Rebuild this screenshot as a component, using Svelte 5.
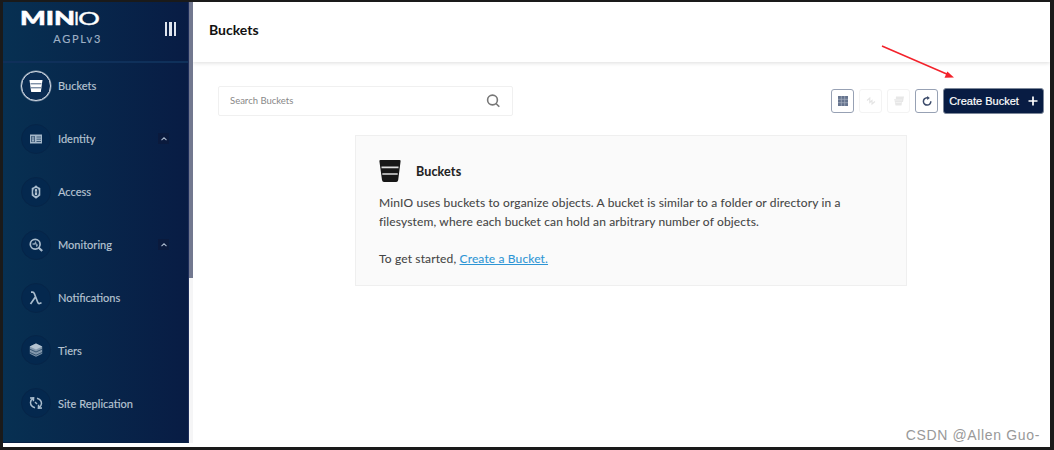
<script>
    let search = '';

    const items = [
        { label: 'Buckets', icon: 'bucket', active: true },
        { label: 'Identity', icon: 'identity', group: true },
        { label: 'Access', icon: 'access' },
        { label: 'Monitoring', icon: 'monitoring', group: true },
        { label: 'Notifications', icon: 'lambda' },
        { label: 'Tiers', icon: 'tiers' },
        { label: 'Site Replication', icon: 'replication' }
    ];
</script>

<div class="screen">
    <div class="app">
        <aside class="sidebar">
            <div class="brand">
                <div class="brand-name">
                    <svg class="logo" width="80" height="16" viewBox="0 0 80 16">
                        <text class="logo-bold" x="-1" y="14.500" textLength="55" lengthAdjust="spacingAndGlyphs">MIN</text>
                        <text class="logo-thin" x="53" y="14.500">I</text>
                        <text class="logo-thin" x="57" y="14.500" textLength="22" lengthAdjust="spacingAndGlyphs">O</text>
                    </svg>
                    <span class="license">AGPLv3</span>
                </div>
                <div class="menu-toggle"><i></i><i></i><i></i></div>
            </div>

            <nav>
                {#each items as item}
                    <a class="item" class:active={item.active} href="#{item.icon}">
                        <span class="circle">
                            <svg width="14" height="14" viewBox="0 0 14 14">
                                {#if item.icon === 'bucket'}
                                    <path d="M.5 1h13l-1.700 12H2.200z" fill="#fff" />
                                    <path d="M1.500 4.800h11M2 8.800h10" stroke="#4a6382" stroke-width="1" />
                                {:else if item.icon === 'identity'}
                                    <path d="M1 2.500h12v9H1z" fill="#a3b6c8" />
                                    <path d="M2.200 4h3.600v6H2.200z" fill="#31506f" />
                                    <path d="M7.500 5h4.500M7.500 7.200h4.500M7.500 9.500h4.500" stroke="#31506f" stroke-width=".9" />
                                    <path d="M4 4.500v4.500M3 8.800h2" stroke="#a3b6c8" stroke-width="1.300" />
                                {:else if item.icon === 'access'}
                                    <path d="M7 .3l2 1.700 2.300 1v7.500L7 13.700 2.700 10.500V3L5 2z" fill="#a9bccd" />
                                    <path d="M7 3a2.800 3.800 0 0 1 0 8a2.800 3.800 0 0 1 0-8z" fill="#183b5e" />
                                    <path d="M7 4v6M6 5.200h2M6 9h2" stroke="#c4d1dc" stroke-width="1.300" />
                                {:else if item.icon === 'monitoring'}
                                    <circle cx="6.200" cy="6.200" r="4.900" fill="none" stroke="#a9bccd" stroke-width="1.700" />
                                    <path d="M9.500 9.500l3.700 3.500" fill="none" stroke="#a9bccd" stroke-width="2.200" />
                                    <path d="M3.500 6h2l1-1.500 1.300 3.500.8-1.500" fill="none" stroke="#8fa5b9" stroke-width="1.300" />
                                {:else if item.icon === 'lambda'}
                                    <path d="M2 1.200h1.500q1.300 0 1.900 1.500l3.300 8.500q.6 1.600 1.800 1.300l2-.8M6.400 6L1.500 13" fill="none" stroke="#a9bccd" stroke-width="1.700" />
                                {:else if item.icon === 'tiers'}
                                    <path d="M7 .5l6.200 3v7.300L7 13.700.8 10.800V3.500z" fill="#8297ac" />
                                    <path d="M7 .5l6.200 3L7 6.500.8 3.500z" fill="#b4c3d0" />
                                    <path d="M.5 6l6.500 3 6.500-3M.5 9.300L7 12.200l6.500-2.900" fill="none" stroke="#173959" stroke-width=".7" />
                                {:else}
                                    <path d="M6 11.800Q1.500 10.500 1.500 6.500 1.600 4 4.200 2.200M1 2l3.600-.2-.2 3.400M8 2.200q4.500 1.300 4.500 5.300-.1 2.500-2.700 4.300M13 12l-3.600.2.200-3.400" fill="none" stroke="#a9bccd" stroke-width="1.500" />
                                    <path d="M6 6l2 2" stroke="#a9bccd" stroke-width="1.500" />
                                {/if}
                            </svg>
                        </span>
                        <span class="label">{item.label}</span>
                        {#if item.group}
                            <span class="chevron">
                                <svg width="8" height="6" viewBox="0 0 8 6"><path d="M1.500 4.200L4 1.800l2.500 2.400" fill="none" stroke="#a9b7cb" stroke-width="1.100" /></svg>
                            </span>
                        {/if}
                    </a>
                {/each}
            </nav>
        </aside>
        <div class="scroll"><div class="thumb"></div></div>

        <main>
            <header><h1>Buckets</h1></header>

            <div class="toolbar">
                <div class="search">
                    <input type="text" placeholder="Search Buckets" bind:value={search}>
                    <svg width="14" height="14" viewBox="0 0 14 14" fill="none" stroke="#777" stroke-width="1.600">
                        <circle cx="6.500" cy="6" r="4.900" /><path d="M10 9.500l3.300 3.300" />
                    </svg>
                </div>
                <div class="actions">
                    <button class="tool" aria-label="Select buckets">
                        <svg width="10" height="10" viewBox="0 0 10 10">
                            <path d="M0 0h10v10H0z" fill="#66748e" />
                            <path d="M3.300 0v10M6.700 0v10M0 3.300h10M0 6.700h10" stroke="#a9b2c2" stroke-width=".7" />
                        </svg>
                    </button>
                    <button class="tool off" disabled aria-label="Set lifecycle">
                        <svg width="10" height="10" viewBox="0 0 10 10"><path d="M1 4.500L3.800 2v4.500L6 4.500V8l3-2.500" fill="none" stroke="#e4e4e4" stroke-width="1.100" /></svg>
                    </button>
                    <button class="tool off" disabled aria-label="Set replication">
                        <svg width="10" height="10" viewBox="0 0 10 10"><path d="M2 .5h8L9 6H8L7.500 9.500h-6L.3 3h1.500z" fill="#e7e7e7" /><path d="M1 4h7M1.500 6.500h6" stroke="#f6f6f6" stroke-width=".7" /></svg>
                    </button>
                    <button class="tool" aria-label="Refresh">
                        <svg width="10" height="10" viewBox="0 0 10 10"><path d="M8.800 5.200A3.700 3.700 0 1 1 5 1.700h1" fill="none" stroke="#3b4a6a" stroke-width="1.500" /><path d="M5.200 0v4l2.600-2z" fill="#3b4a6a" /></svg>
                    </button>
                    <button class="create">
                        <span>Create Bucket</span>
                        <svg width="10" height="10" viewBox="0 0 10 10"><path d="M5 .5v9M.5 5h9" stroke="#fff" stroke-width="1.700" /></svg>
                    </button>
                </div>
            </div>

            <section class="help">
                <h2>
                    <svg width="22" height="22" viewBox="0 0 22 22">
                        <path d="M1.500 0h19q1.300 0 1.100 1.300L19.200 20q-.3 2-2 2H5q-1.700 0-2-2L.4 1.300Q.2 0 1.500 0z" fill="#171717" />
                        <path d="M2.500 7.300h17M3.300 14h15.400" stroke="#ddd" stroke-width="1.700" />
                    </svg>
                    Buckets
                </h2>
                <p>MinIO uses buckets to organize objects. A bucket is similar to a folder or directory in a<br>filesystem, where each bucket can hold an arbitrary number of objects.</p>
                <p>To get started, <a href="#create">Create a Bucket.</a></p>
            </section>
        </main>

        <svg class="arrow" width="76" height="38" viewBox="0 0 76 38">
            <path d="M1 2l67 29" stroke="#f3222b" stroke-width="1.500" />
            <path d="M73 33.500l-9.500.2 2.800-6.300z" fill="#f3222b" />
        </svg>
        <span class="credit">CSDN @Allen Guo-</span>
    </div>
</div>

<style>
    :global(body) { margin: 0; font-family: Lato, sans-serif; }
    .screen { width: 1054px; height: 450px; box-sizing: border-box; padding: 2px 4px 3px 3px; background: #1a1a1a; overflow: hidden; }
    .app { position: relative; display: flex; height: 445px; background: #fff; }

    .sidebar { width: 186px; height: 441px; box-sizing: border-box; background: linear-gradient(90deg, #073052, #081c44); border-bottom: 1px solid #072044; border-right: 1px solid #1d2d5b; }
    .brand { display: flex; justify-content: space-between; height: 59px; padding: 0 12px 0 18px; border-bottom: 2px solid #0f305a; }
    .brand-name { display: flex; flex-direction: column; width: 80px; padding-top: 8px; }
    .logo { display: block; overflow: visible; }
    .logo-bold { font: 900 18px Lato, sans-serif; fill: #fff; stroke: #fff; stroke-width: .5px; }
    .logo-thin { font: 400 18px Lato, sans-serif; fill: #fff; stroke: #fff; stroke-width: .3px; }
    .license { align-self: flex-end; margin: 5px -1px 0 0; font-size: 11px; line-height: 15px; letter-spacing: 1.700px; color: #9fb0c5; -webkit-text-stroke: .15px; }
    .menu-toggle { display: flex; gap: 2px; padding-top: 20px; }
    .menu-toggle i { width: 2.500px; height: 14px; background: #dfe5ee; }

    .item { display: flex; align-items: center; height: 52.900px; padding: 0 19px 0 18px; color: #b7c4d2; text-decoration: none; }
    nav { margin-top: -3.500px; }
    .circle { display: flex; align-items: center; justify-content: center; box-sizing: border-box; width: 30px; height: 30px; border-radius: 50%; border: 1px solid #062548; background: #04284e; }
    .active .circle { border: 1.500px solid #d5dde6; background: #0a2c53; box-shadow: 0 0 0 .5px #8798ad; }
    .label { flex: 1; margin-left: 7px; font-size: 11.050px; -webkit-text-stroke: .15px; }
    .chevron { display: flex; align-items: center; justify-content: center; width: 11px; height: 11px; background: #0a1a3d; }

    .scroll { width: 4px; height: 441px; background: #f5f5f6; }
    .thumb { height: 276px; background: #72788f; }

    main { flex: 1; }
    header { height: 60px; padding-left: 16px; display: flex; align-items: center; box-shadow: 0 1px 4px #ddd; box-sizing: border-box; clip-path: inset(0 0 -8px 0); }
    h1 { margin: -6px 0 0; font-size: 14px; color: #111; }
    .toolbar { display: flex; justify-content: space-between; padding: 24px 6px 0 25px; }
    .search { display: flex; align-items: center; box-sizing: border-box; width: 295px; height: 30px; padding: 0 12px 0 11px; border: 1px solid #f0f0f0; border-radius: 2px; }
    .search input { flex: 1; border: 0; padding: 0; margin-top: -2px; outline: 0; font: 9.500px Lato, sans-serif; }
    .search input::placeholder { color: #888; }
    .actions { display: flex; gap: 5px; padding-top: 3px; }
    button { display: flex; align-items: center; justify-content: center; box-sizing: border-box; padding: 0; border-radius: 3px; }
    .tool { width: 23px; height: 24px; border: 1px solid #97a1b4; background: #fff; }
    .off { border-color: #f3f3f3; }
    .create { width: 101px; height: 26px; margin-top: -1px; border: 1px solid #7c8799; background: #081c43; color: #fff; font: 11px "Liberation Sans", sans-serif; -webkit-text-stroke: .2px; gap: 9px; }

    .help { width: 552px; height: 151px; box-sizing: border-box; margin: 19px 0 0 162px; padding: 24px 23px; border: 1px solid #efefef; background: #fafafa; font-size: 12px; letter-spacing: .14px; line-height: 19px; color: #444; -webkit-text-stroke: .08px; }
    h2 { display: flex; align-items: center; gap: 15px; height: 22px; margin: 0 0 11px; font-size: 12.500px; color: #222; }
    p { margin: 0 0 18px; white-space: nowrap; }
    p a { color: #2d95d5; }

    .arrow { position: absolute; left: 878px; top: 42px; }
    .credit { position: absolute; right: 10px; bottom: 4px; font: 14px "Liberation Sans", sans-serif; letter-spacing: .65px; color: #999; }
</style>
